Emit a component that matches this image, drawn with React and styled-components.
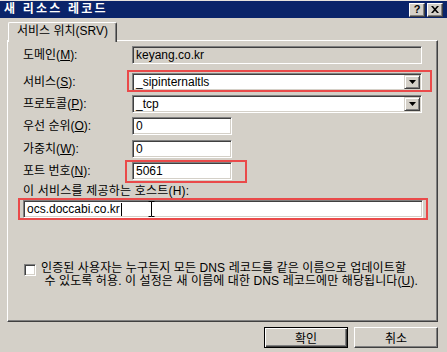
import React from "react";
import styled, { createGlobalStyle } from "styled-components";

const GlobalStyle = createGlobalStyle`
  html, body {
    margin: 0;
    padding: 0;
    background: #d4d0c8;
  }
  * {
    box-sizing: border-box;
  }
`;

const FONT = `"Liberation Sans", "Noto Sans CJK KR", sans-serif`;

// Window frame

const Window = styled.div`
  width: 447px;
  height: 352px;
  background: #d4d0c8;
  border-top: 1px solid #e6e3de;
  font-family: ${FONT};
  font-size: 12px;
  color: #000;
  display: flex;
  flex-direction: column;
  overflow: hidden;
`;

const TitleBar = styled.div`
  height: 17px;
  background: #0a246a;
  display: flex;
  align-items: center;
  justify-content: space-between;
  padding: 0 4px 0 4px;
`;

const Title = styled.span`
  color: #fff;
  font-weight: bold;
  font-size: 12px;
  letter-spacing: 2.2px;
  line-height: 17px;
`;

const CaptionButtons = styled.div`
  display: flex;
  gap: 2px;
`;

const CaptionButton = styled.div`
  width: 16px;
  height: 14px;
  background: #d4d0c8;
  border: 1px solid;
  border-color: #fff #404040 #404040 #fff;
  box-shadow: inset -1px -1px #808080;
  display: flex;
  align-items: center;
  justify-content: center;
  font-size: 11px;
  font-weight: bold;
  line-height: 1;
  color: #000;
`;

const Body = styled.div`
  flex: 1;
  display: flex;
  flex-direction: column;
  padding: 4px 9px 0 7px;
`;

// Tabs

const TabStrip = styled.div`
  display: flex;
  padding-left: 1px;
  height: 18px;
`;

const Tab = styled.div`
  position: relative;
  z-index: 1;
  height: 20px;
  padding: 0 8px 0 8px;
  width: 109px;
  background: #d4d0c8;
  border-top: 1px solid #fff;
  border-left: 1px solid #fff;
  border-right: 1px solid #404040;
  box-shadow: inset -1px 0 #808080;
  border-radius: 2px 2px 0 0;
  line-height: 17px;
  white-space: nowrap;
`;

const Panel = styled.div`
  width: 431px;
  height: 282px;
  border: 1px solid;
  border-color: #fff #404040 #404040 #fff;
  box-shadow: inset -1px -1px #808080;
  padding: 4px 14px 0 15px;
  display: flex;
  flex-direction: column;
`;

// Form rows

const FieldRow = styled.div`
  display: flex;
  align-items: center;
  margin-top: ${(p) => p.$top}px;
`;

const Label = styled.div`
  width: 109px;
  white-space: nowrap;
  line-height: 14px;
`;

const BlockLabel = styled(Label)`
  width: auto;
  margin-top: ${(p) => p.$top}px;
  letter-spacing: 0.2px;
`;

const Highlight = styled.div`
  position: relative;
  display: flex;
  &::after {
    content: "";
    position: absolute;
    left: ${(p) => p.$l}px;
    right: ${(p) => p.$r}px;
    top: ${(p) => p.$t}px;
    bottom: ${(p) => p.$b}px;
    border: 2px solid #ea4a4a;
    pointer-events: none;
  }
`;

const Sunken = styled.div`
  width: ${(p) => p.$width}px;
  height: 18px;
  background: ${(p) => (p.$readOnly ? "#d4d0c8" : "#fff")};
  border: 1px solid;
  border-color: #808080 #fff #fff #808080;
  box-shadow: inset 1px 1px #404040, inset -1px -1px #d4d0c8;
  padding: 0 2px 0 3px;
  display: flex;
  align-items: center;
  justify-content: space-between;
  line-height: 14px;
  white-space: nowrap;
  position: relative;
`;

const DropButton = styled.div`
  width: 16px;
  height: 14px;
  margin-right: -1px;
  background: #d4d0c8;
  border: 1px solid;
  border-color: #d4d0c8 #404040 #404040 #d4d0c8;
  box-shadow: inset 1px 1px #fff, inset -1px -1px #808080;
  display: flex;
  align-items: center;
  justify-content: center;
`;

const Caret = styled.span`
  display: inline-block;
  width: 1px;
  height: 13px;
  background: #000;
  vertical-align: middle;
  margin-left: 1px;
`;

const Cursor = styled.svg`
  position: absolute;
  left: 124px;
  top: 0px;
`;

// Checkbox

const CheckRow = styled.label`
  display: flex;
  align-items: flex-start;
  margin-top: ${(p) => p.$top}px;
  padding-left: 1px;
`;

const CheckBox = styled.span`
  width: 12px;
  height: 12px;
  margin-top: 2px;
  margin-right: 5px;
  flex: none;
  background: #fff;
  border: 1px solid;
  border-color: #808080 #fff #fff #808080;
  box-shadow: inset 1px 1px #404040, inset -1px -1px #d4d0c8;
`;

const CheckText = styled.span`
  line-height: 13px;
  letter-spacing: 0.1px;
  white-space: nowrap;
`;

// Buttons

const ButtonRow = styled.div`
  display: flex;
  justify-content: flex-end;
  gap: 6px;
  margin-top: 5px;
`;

const PushButton = styled.button`
  width: 84px;
  height: 21px;
  font-family: ${FONT};
  font-size: 12px;
  color: #000;
  background: #d4d0c8;
  padding: 0;
  border: 1px solid;
  border-color: ${(p) => (p.$default ? "#000" : "#fff #404040 #404040 #fff")};
  box-shadow: ${(p) =>
    p.$default
      ? "inset 1px 1px #fff, inset -1px -1px #404040, inset -2px -2px #808080"
      : "inset -1px -1px #808080"};
`;

const DownArrow = () => (
  <svg width="7" height="4" viewBox="0 0 7 4">
    <path d="M0 0h7L3.5 4z" fill="#000" />
  </svg>
);

const Combo = ({ value }) => (
  <Sunken $width={290}>
    <span>{value}</span>
    <DropButton>
      <DownArrow />
    </DropButton>
  </Sunken>
);

const App = () => {
  return (
    <>
      <GlobalStyle />
      <Window>
        <TitleBar>
          <Title>새 리소스 레코드</Title>
          <CaptionButtons>
            <CaptionButton>?</CaptionButton>
            <CaptionButton>
              <svg width="8" height="7" viewBox="0 0 8 7">
                <path d="M0 0h2l2 2.3L6 0h2L5 3.5 8 7H6L4 4.7 2 7H0l3-3.5z" fill="#000" />
              </svg>
            </CaptionButton>
          </CaptionButtons>
        </TitleBar>

        <Body>
          <TabStrip>
            <Tab>서비스 위치(SRV)</Tab>
          </TabStrip>
          <Panel>
            <FieldRow $top={1}>
              <Label>
                도메인(<u>M</u>):
              </Label>
              <Sunken $width={290} $readOnly>
                keyang.co.kr
              </Sunken>
            </FieldRow>

            <FieldRow $top={9}>
              <Label>
                서비스(<u>S</u>):
              </Label>
              <Highlight $l={-5} $r={-10} $t={-3} $b={-1}>
                <Combo value="_sipinternaltls" />
              </Highlight>
            </FieldRow>

            <FieldRow $top={4}>
              <Label>
                프로토콜(<u>P</u>):
              </Label>
              <Combo value="_tcp" />
            </FieldRow>

            <FieldRow $top={4}>
              <Label>
                우선 순위(<u>O</u>):
              </Label>
              <Sunken $width={100}>0</Sunken>
            </FieldRow>

            <FieldRow $top={5}>
              <Label>
                가중치(<u>W</u>):
              </Label>
              <Sunken $width={100}>0</Sunken>
            </FieldRow>

            <FieldRow $top={4}>
              <Label>
                포트 번호(<u>N</u>):
              </Label>
              <Highlight $l={-7} $r={-15} $t={-2} $b={-3}>
                <Sunken $width={100}>5061</Sunken>
              </Highlight>
            </FieldRow>

            <BlockLabel $top={4}>이 서비스를 제공하는 호스트(H):</BlockLabel>

            <FieldRow $top={2}>
              <Highlight $l={-5} $r={-5} $t={-2} $b={-2}>
                <Sunken $width={400}>
                  <span>
                    ocs.doccabi.co.kr
                    <Caret />
                  </span>
                  <Cursor width="7" height="16" viewBox="0 0 7 16">
                    <path
                      d="M0.5 0.5h2.5v0.5M3.5 1v14M0.5 15.5h2.5M3.5 1V0.5h3M3.5 15v0.5h3"
                      stroke="#000"
                      strokeWidth="1"
                      fill="none"
                    />
                  </Cursor>
                </Sunken>
              </Highlight>
            </FieldRow>

            <CheckRow $top={44}>
              <CheckBox />
              <CheckText>
                인증된 사용자는 누구든지 모든 DNS 레코드를 같은 이름으로 업데이트할
                <br />
                &nbsp;수 있도록 허용. 이 설정은 새 이름에 대한 DNS 레코드에만 해당됩니다(<u>U</u>).
              </CheckText>
            </CheckRow>
          </Panel>

          <ButtonRow>
            <PushButton $default>확인</PushButton>
            <PushButton>취소</PushButton>
          </ButtonRow>
        </Body>
      </Window>
    </>
  );
};

export default App;
